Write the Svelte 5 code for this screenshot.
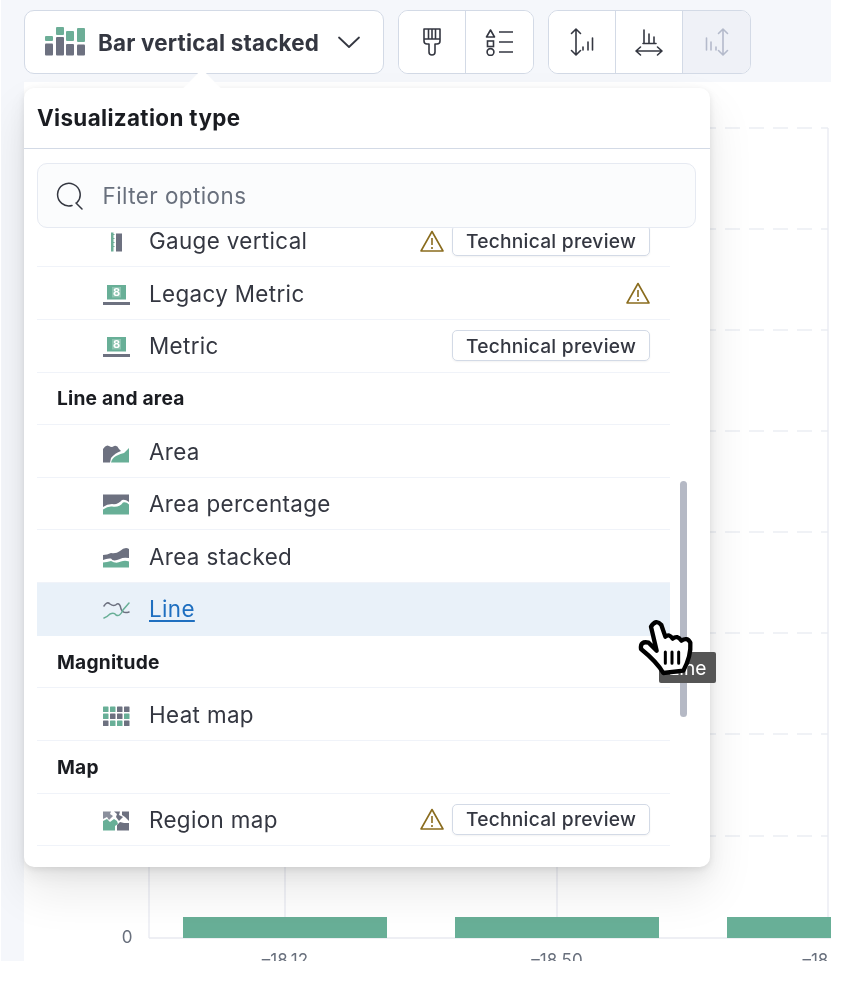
<script>
  const rows = [
    { type: 'item', icon: 'gauge', label: 'Gauge vertical', warn: true, badge: true },
    { type: 'item', icon: 'metric', label: 'Legacy Metric', warn: true },
    { type: 'item', icon: 'metric', label: 'Metric', badge: true },
    { type: 'group', label: 'Line and area' },
    { type: 'item', icon: 'area', label: 'Area' },
    { type: 'item', icon: 'areaPct', label: 'Area percentage' },
    { type: 'item', icon: 'areaStack', label: 'Area stacked' },
    { type: 'item', icon: 'line', label: 'Line', active: true },
    { type: 'group', label: 'Magnitude' },
    { type: 'item', icon: 'heat', label: 'Heat map' },
    { type: 'group', label: 'Map' },
    { type: 'item', icon: 'region', label: 'Region map', warn: true, badge: true }
  ];
  const heat = [
    ['g', 'g', 'd', 'd'],
    ['g', 'd', 'd', 'g'],
    ['d', 'g', 'g', 'd']
  ];
  const gridY = [128, 229, 330, 431, 532, 633, 734, 836];
  const bars = [183, 455, 727];
  const ticks = [[285, '–18.12'], [557, '–18.50'], [828, '–18.88']];
</script>

<div class="page">
  <div class="shot">
    <div class="toolbar">
      <button class="switcher">
        <svg width="42" height="30" viewBox="0 0 42 30">
          <g fill="#6dae97">
            <rect x="1" y="9" width="8" height="5" rx="1" />
            <rect x="12" y="0" width="8" height="8" rx="1" />
            <rect x="22" y="4" width="8" height="10" rx="1" />
            <rect x="33" y="1" width="8" height="14" rx="1" />
          </g>
          <g fill="#6d7180">
            <rect x="1" y="16.500" width="8" height="12" rx="1" />
            <rect x="12" y="10" width="8" height="18.500" rx="1" />
            <rect x="22" y="17" width="8" height="11.500" rx="1" />
            <rect x="33" y="17.500" width="8" height="11" rx="1" />
          </g>
        </svg>
        <span class="switcher-label">Bar vertical stacked</span>
        <svg width="24" height="14" viewBox="0 0 24 14" fill="none" stroke="#343741" stroke-width="1.800" stroke-linecap="round" stroke-linejoin="round">
          <path d="M2 2.500 L12 12 L22 2.500" />
        </svg>
      </button>

      <div class="group">
        <button class="tool">
          <svg width="24" height="30" viewBox="0 0 24 30" fill="none" stroke="#343741" stroke-width="1.600" stroke-linejoin="round">
            <path d="M4 2 H20 V14 Q20 17 17 17 H15 V25 Q15 28 12 28 Q9 28 9 25 V17 H7 Q4 17 4 14 Z" />
            <path d="M4 12 H20 M8.500 2 V12 M12 2 V12 M15.500 2 V12" />
          </svg>
        </button>
        <button class="tool">
          <svg width="30" height="28" viewBox="0 0 30 28" fill="none" stroke="#343741" stroke-width="1.600">
            <path d="M5.500 2 L9.500 9 H1.500 Z" stroke-linejoin="round" />
            <rect x="2.500" y="13" width="6" height="5.500" />
            <circle cx="5.500" cy="24" r="3.400" />
            <path d="M14 4 H28 M14 14 H28 M14 24 H28" />
          </svg>
        </button>
      </div>

      <div class="group">
        <button class="tool">
          <svg width="26" height="30" viewBox="0 0 26 30" fill="none" stroke="#343741" stroke-width="1.600" stroke-linecap="round" stroke-linejoin="round">
            <path d="M7 3 V27 M2.500 6.500 L7 2 L11.500 6.500 M2.500 23.500 L7 28 L11.500 23.500" />
            <path d="M14 23 V20 M19 23 V15 M23.500 23 V11" />
          </svg>
        </button>
        <button class="tool">
          <svg width="30" height="30" viewBox="0 0 30 30" fill="none" stroke="#343741" stroke-width="1.600" stroke-linecap="round" stroke-linejoin="round">
            <path d="M3 24 H27 M6.500 20 L2 24 L6.500 28 M23.500 20 L28 24 L23.500 28" />
            <path d="M10 16 V3 M15 16 V7 M20 16 V10 M9 16.500 H22" />
          </svg>
        </button>
        <button class="tool off">
          <svg width="26" height="30" viewBox="0 0 26 30" fill="none" stroke="#b4bacb" stroke-width="1.600" stroke-linecap="round" stroke-linejoin="round">
            <path d="M19 3 V27 M14.500 6.500 L19 2 L23.500 6.500 M14.500 23.500 L19 28 L23.500 23.500" />
            <path d="M2.500 23 V11 M7 23 V15 M12 23 V20" />
          </svg>
        </button>
      </div>
    </div>

    <div class="canvas">
      <svg class="chart" width="807" height="879" viewBox="24 82 807 879">
        <g stroke="#eceef4" stroke-width="1.600" stroke-dasharray="15 9">
          {#each gridY as y}
            <line x1="149" x2="828" y1={y} y2={y} />
          {/each}
        </g>
        <g stroke="#e8eaf1" stroke-width="1.300">
          <line x1="149" x2="149" y1="128" y2="938" />
          <line x1="285" x2="285" y1="128" y2="938" />
          <line x1="557" x2="557" y1="128" y2="938" />
          <line x1="828" x2="828" y1="128" y2="938" />
        </g>
        <line x1="149" x2="831" y1="938" y2="938" stroke="#e8eaf1" stroke-width="1.600" />
        {#each bars as x}
          <rect {x} y="917" width="204" height="21" fill="#68af97" />
        {/each}
        <text class="axis" x="127" y="943" text-anchor="middle">0</text>
        {#each ticks as [x, t]}
          <text class="axis" {x} y="966" text-anchor="middle">{t}</text>
        {/each}
      </svg>
    </div>

    <div class="popover">
      <span class="arrow"></span>
      <div class="title">Visualization type</div>
      <div class="body">
        <div class="search">
          <svg width="28" height="28" viewBox="0 0 28 28" fill="none" stroke="#343741" stroke-width="1.500" stroke-linecap="round">
            <path d="M21 20.500 A11.300 11.300 0 1 0 16 23.500 M20 21 L26 27" />
          </svg>
          <span>Filter options</span>
        </div>
        <div class="listwrap">
          <div class="list">
            {#each rows as r}
              {#if r.type === 'group'}
                <div class="group-title">{r.label}</div>
              {:else}
                <div class="row" class:active={r.active}>
                  <svg class="ico" width="27" height="27" viewBox="0 0 27 27">
                    {#if r.icon === 'gauge'}
                      <path d="M8 5.500 H10.500 V7 H11.500 V8 H10.500 V11 H11.500 V12 H10.500 V15 H11.500 V16 H10.500 V19 H11.500 V20 H10.500 V24.500 H8 Z" fill="#6dae97" />
                      <rect x="13" y="6.500" width="6" height="18" fill="#6d7180" />
                    {:else if r.icon === 'metric'}
                      <rect x="4" y="5" width="19" height="14.500" fill="#68af97" />
                      <rect x="9" y="7" width="9" height="10.500" fill="#8cc4b0" />
                      <text class="eight" x="13.500" y="16" text-anchor="middle">8</text>
                      <rect x="0" y="22" width="27" height="3" fill="#6d7180" />
                    {:else if r.icon === 'area'}
                      <path d="M0 24.500 V11 Q3 6 6 8 Q9 10 11 8 Q14 6.500 16 11 L18 13 Q12 15 8 20 L7 24.500 Z" fill="#6d7180" />
                      <path d="M8 24.500 Q9 20 13 18 Q18 15.500 21 15 L26 10 V24.500 Z" fill="#68af97" />
                    {:else if r.icon === 'areaPct'}
                      <path d="M0 4.500 H26 V12 Q22 9 19 10 Q15 15 9 14 Q4 14 0 17 Z" fill="#6d7180" />
                      <path d="M0 19.500 Q5 16 9 16.500 Q16 18 20 12.500 Q23 11.500 26 14.500 V24.500 H0 Z" fill="#68af97" />
                    {:else if r.icon === 'areaStack'}
                      <path d="M0 12 Q4 12 8 10 Q13 11 17 8 Q22 3.500 26 6 V15 Q20 14 17 16 Q10 19 8 15.500 Q4 15 0 17 Z" fill="#6d7180" />
                      <path d="M0 19.500 Q4 19 8 18 Q13 21 18 18.500 Q22 17 26 18.500 V24.500 H0 Z" fill="#68af97" />
                    {:else if r.icon === 'line'}
                      <g fill="none" stroke-width="1.500" stroke-linecap="round">
                        <path d="M1 11 Q4 6 7 9 Q11 12 14 9 Q17 8 18 14 Q20 19 26 17" stroke="#6d7180" />
                        <path d="M1 23 Q4 22 7 19 Q11 17 13 20 Q17 22 20 15 L26 8" stroke="#68af97" />
                      </g>
                    {:else if r.icon === 'heat'}
                      {#each heat as cells, y}
                        {#each cells as c, x}
                          <rect x={x * 7} y={5.5 + y * 7} width="5.500" height="5.500" rx="0.600" fill={c === 'g' ? '#68af97' : '#6d7180'} />
                        {/each}
                      {/each}
                    {:else if r.icon === 'region'}
                      <path d="M0 5.500 H8 L7 8 L10 10 L6 14 L4 11 L0 13 Z" fill="#8a8f9c" />
                      <path d="M11 5.500 H17 L16 9 L20 11 L16 15 L13 11 L14 8 Z" fill="#6d7180" />
                      <path d="M19 5.500 H26 V15 L22 11 L19 9 Z" fill="#6d7180" />
                      <path d="M0 15 L4 13 L7 16 L11 13 L14 15 L15 18 L12 20 V24.500 H0 Z" fill="#68af97" />
                      <path d="M14 19 L17 16 L21 17 L26 17 V24.500 H14 Z" fill="#6d7180" />
                    {/if}
                  </svg>
                  <span class="label">{r.label}</span>
                  {#if r.warn}
                    <svg class="warn" class:solo={!r.badge} width="24" height="24" viewBox="0 0 24 24" fill="none" stroke="#8a6c1e" stroke-width="1.600" stroke-linejoin="round">
                      <path d="M12 2.500 L23 22 H1 Z" />
                      <path d="M12 9 V16 M12 18 V20" />
                    </svg>
                  {/if}
                  {#if r.badge}
                    <span class="badge">Technical preview</span>
                  {/if}
                </div>
              {/if}
            {/each}
          </div>
          <span class="thumb"></span>
        </div>
      </div>
    </div>

    <span class="tip">Line</span>

    <svg class="hand" width="144" height="140" viewBox="0 0 432 420">
      <path d="M153 140 Q168 116 184 135 L196 170 Q208 160 218 176 Q232 164 244 182 Q262 170 271 188 Q274 228 250 272 L190 279 Q170 245 123 207 Q120 182 146 188 L170 212 Z" fill="#fff" stroke="#000" stroke-width="13" stroke-linejoin="round" />
      <path d="M196 216 V250 M216 216 V250 M236 216 V250" stroke="#000" stroke-width="9" stroke-linecap="round" />
    </svg>
  </div>
</div>

<style>
  :global(body) {
    margin: 0;
    background: #fff;
  }
  .page {
    width: 844px;
    height: 983px;
    background: #fff;
    overflow: hidden;
    font-family: Inter, "Liberation Sans", sans-serif;
    color: #343741;
  }
  .shot {
    position: relative;
    width: 830px;
    height: 961px;
    margin-left: 1px;
    overflow: hidden;
    background: #f5f7fb;
    display: flex;
    flex-direction: column;
    filter: blur(0.45px);
  }
  button {
    font: inherit;
    color: inherit;
    padding: 0;
    margin: 0;
  }
  .toolbar {
    height: 82px;
    flex: none;
    box-sizing: border-box;
    padding: 10px 0 0 23px;
    display: flex;
    align-items: flex-start;
    gap: 14px;
  }
  .switcher {
    width: 360px;
    height: 64px;
    box-sizing: border-box;
    background: #fff;
    border: 1.600px solid #d3dae6;
    border-radius: 10px;
    display: flex;
    align-items: center;
    padding: 0 22px 0 19px;
  }
  .switcher-label {
    margin-left: 12px;
    margin-right: auto;
    font-size: 22.400px;
    font-weight: 700;
    letter-spacing: 0.2px;
    white-space: nowrap;
  }
  .group {
    display: flex;
    height: 64px;
    box-sizing: border-box;
    border: 1.600px solid #d3dae6;
    border-radius: 10px;
    overflow: hidden;
    background: #fff;
  }
  .tool {
    width: 67px;
    height: 100%;
    border: 0;
    background: #fff;
    border-right: 1.600px solid #d3dae6;
    display: flex;
    align-items: center;
    justify-content: center;
  }
  .tool:last-child {
    border-right: 0;
  }
  .tool.off {
    background: #eff1f7;
  }
  .canvas {
    flex: 1;
    margin-left: 23px;
    background: #fff;
    min-height: 0;
  }
  .chart {
    display: block;
  }
  .axis {
    font-size: 17px;
    fill: #69707d;
  }
  .popover {
    position: absolute;
    left: 23px;
    top: 88px;
    width: 686px;
    height: 779px;
    box-sizing: border-box;
    background: #fff;
    border-radius: 10px;
    box-shadow: 0 2px 6px rgba(0, 0, 0, 0.08), 0 8px 18px rgba(0, 0, 0, 0.06), 0 24px 48px rgba(0, 0, 0, 0.09);
    display: flex;
    flex-direction: column;
  }
  .arrow {
    position: absolute;
    left: 164px;
    top: -13px;
    width: 28px;
    height: 28px;
    background: #fff;
    transform: rotate(45deg);
    border-radius: 2px 0 0 0;
  }
  .title {
    position: relative;
    height: 61px;
    flex: none;
    box-sizing: border-box;
    padding: 15px 13px 0;
    font-size: 22.400px;
    line-height: 30px;
    font-weight: 700;
    letter-spacing: 0.35px;
    color: #1a1c21;
    border-bottom: 1.600px solid #d3dae6;
  }
  .body {
    flex: 1;
    min-height: 0;
    display: flex;
    flex-direction: column;
    padding: 14px 14px 0 13px;
  }
  .search {
    height: 65px;
    flex: none;
    box-sizing: border-box;
    background: #fbfcfd;
    border: 1.600px solid #e6eaf2;
    border-radius: 10px;
    display: flex;
    align-items: center;
    gap: 18.500px;
    padding-left: 18px;
    font-size: 22.400px;
    letter-spacing: 0.45px;
    color: #69707d;
    position: relative;
    z-index: 1;
  }
  .listwrap {
    position: relative;
    height: 628px;
    overflow: hidden;
  }
  .list {
    width: 633px;
    margin-top: -13.300px;
  }
  .row {
    height: 52.640px;
    box-sizing: border-box;
    display: flex;
    align-items: center;
    padding: 0 20px 0 66px;
    border-bottom: 1.600px solid #f0f3f9;
  }
  .row.active {
    background: #e9f1f9;
    border-bottom-color: #e9f1f9;
  }
  .row.active .label {
    color: #1f6fc0;
    text-decoration: underline;
    text-underline-offset: 3px;
  }
  .ico {
    flex: none;
  }
  .label {
    margin-left: 19px;
    margin-right: auto;
    font-size: 22.400px;
    letter-spacing: 0.36px;
    white-space: nowrap;
  }
  .warn {
    margin-right: 8px;
    flex: none;
  }
  .warn.solo {
    margin-right: 0;
  }
  .badge {
    width: 198px;
    height: 31px;
    box-sizing: border-box;
    border: 1.600px solid #d3dae6;
    border-radius: 5px;
    display: flex;
    align-items: center;
    justify-content: center;
    font-size: 19.200px;
    font-weight: 450;
    letter-spacing: 0.25px;
    white-space: nowrap;
    box-shadow: 0 1px 2px rgba(0, 0, 0, 0.05);
  }
  .group-title {
    height: 52.640px;
    box-sizing: border-box;
    display: flex;
    align-items: center;
    padding-left: 20px;
    font-size: 19.200px;
    font-weight: 700;
    letter-spacing: 0.2px;
    color: #1a1c21;
    border-bottom: 1.600px solid #f0f3f9;
  }
  .eight {
    font-size: 11px;
    font-weight: 700;
    fill: #fff;
    font-family: Inter, sans-serif;
  }
  .thumb {
    position: absolute;
    left: 643px;
    top: 253px;
    width: 7px;
    height: 236px;
    border-radius: 4px;
    background: #b5b9c5;
  }
  .tip {
    position: absolute;
    left: 658px;
    top: 652px;
    width: 57px;
    height: 31px;
    box-sizing: border-box;
    background: #555;
    color: #fff;
    font-size: 19.200px;
    display: flex;
    align-items: center;
    justify-content: center;
    border-radius: 2px;
  }
  .hand {
    position: absolute;
    left: 599px;
    top: 580px;
    pointer-events: none;
  }
</style>
